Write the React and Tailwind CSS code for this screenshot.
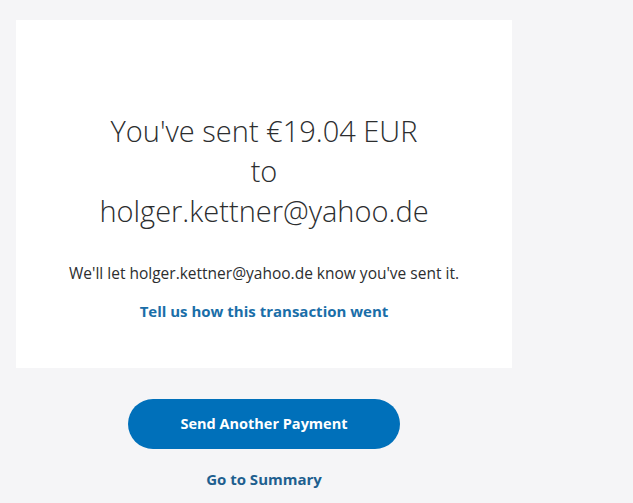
export default function App() {
  return (
    <div className="min-h-[503px] w-full bg-[#f5f5f7] pl-4 pt-5" style={{ fontFamily: '"Open Sans", Lato, sans-serif' }}>
      <div className="flex h-[348px] w-[496px] flex-col items-center bg-white pt-[91px]">
        <h1 className="text-center text-[29px] font-light leading-[40px] text-[#2c2e2f]">
          You've sent €19.04 EUR
          <br />
          to
          <br />
          holger.kettner@yahoo.de
        </h1>
        <p className="mt-[31px] text-[15.5px] leading-[22px] text-[#2c2e2f]">
          We'll let holger.kettner@yahoo.de know you've sent it.
        </p>
        <a className="mt-[16px] text-[15px] font-bold leading-[22px] text-[#1a6ea8]">
          Tell us how this transaction went
        </a>
      </div>
      <div className="flex w-[496px] flex-col items-center">
        <button className="mt-[31px] h-[50px] w-[272px] rounded-full bg-[#0070ba] text-[14.5px] font-bold text-white">
          Send Another Payment
        </button>
        <a className="mt-[19px] text-[15px] font-bold leading-[22px] text-[#1e5f8f]">Go to Summary</a>
      </div>
    </div>
  );
}
